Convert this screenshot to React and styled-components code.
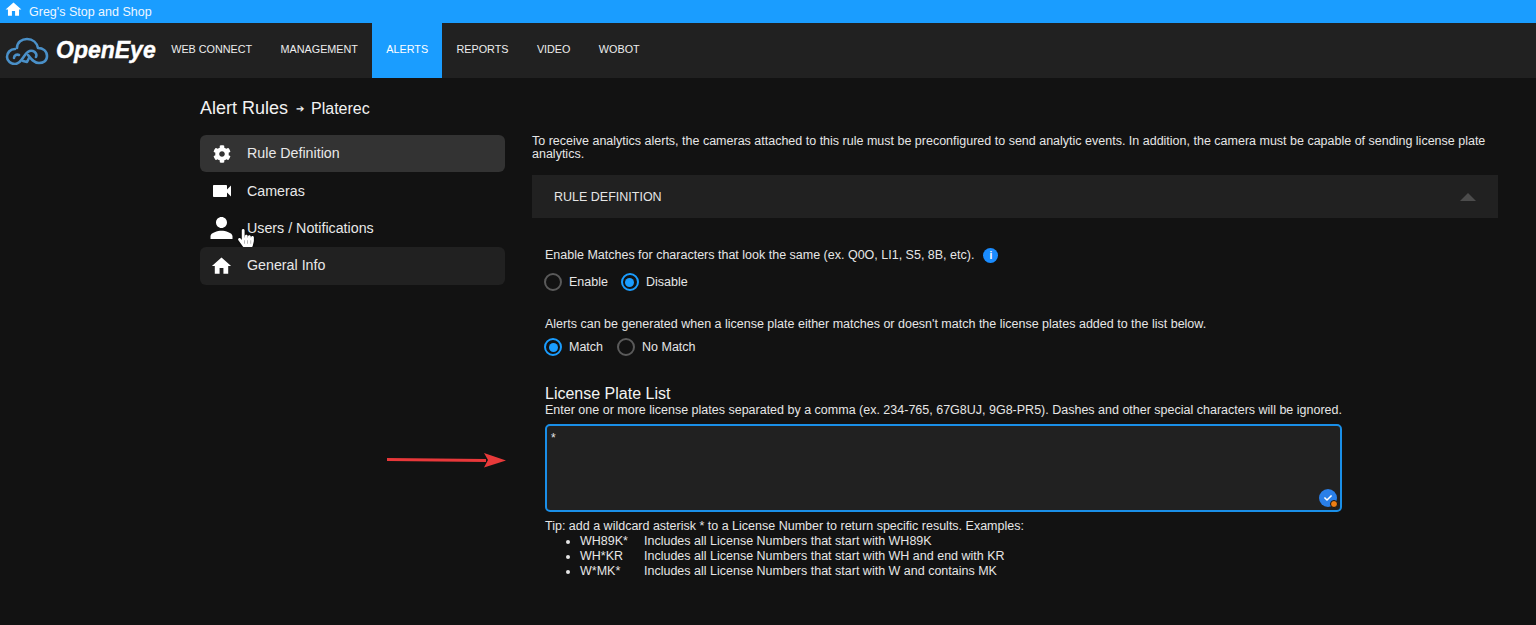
import React from "react";
import styled, { createGlobalStyle } from "styled-components";
import { FaCog, FaHandPointer, FaCheck } from "react-icons/fa";
import { MdHome, MdPerson, MdVideocam } from "react-icons/md";

const GlobalStyle = createGlobalStyle`
  html, body {
    margin: 0;
    padding: 0;
    background: #121212;
    height: 100%;
    overflow: hidden;
  }
  body {
    font-family: "Liberation Sans", Arial, sans-serif;
    color: #fff;
  }
`;

const TopBar = styled.div`
  height: 23px;
  background: #1a9dff;
  display: flex;
  align-items: center;
  gap: 6px;
  padding-left: 4px;
  font-size: 12.5px;
  color: #eef7ff;
  svg {
    font-size: 19px;
    color: #fff;
    margin-top: -4px;
  }
`;

const NavBar = styled.nav`
  height: 55px;
  background: #212121;
  display: flex;
  align-items: stretch;
`;

const Brand = styled.div`
  width: 157px;
  display: flex;
  align-items: center;
  gap: 7px;
  padding-left: 5px;
  box-sizing: border-box;
  flex-shrink: 0;
`;

const BrandName = styled.span`
  font-size: 23px;
  font-weight: 700;
  font-style: italic;
  color: #fff;
  -webkit-text-stroke: 0.4px #fff;
`;

const NavItem = styled.div`
  display: flex;
  align-items: center;
  padding: 0 14.2px 3px;
  font-size: 10.8px;
  color: ${(p) => (p.$active ? "#fff" : "#eee")};
  background: ${(p) => (p.$active ? "#1a9dff" : "transparent")};
`;

const Main = styled.div`
  display: flex;
  padding-left: 200px;
  align-items: flex-start;
`;

const Side = styled.aside`
  width: 305px;
  flex-shrink: 0;
  margin-right: 27px;
`;

const Crumbs = styled.div`
  height: 57px;
  box-sizing: border-box;
  padding-top: 4px;
  display: flex;
  align-items: center;
  font-size: 18px;
  color: #f2f2f2;
`;

const CrumbSep = styled.span`
  font-size: 10px;
  margin: 0 7.5px;
`;

const CrumbLeaf = styled.span`
  font-size: 16px;
`;

const SideItem = styled.div`
  position: relative;
  height: 37.4px;
  box-sizing: border-box;
  padding: 0 0 1px 47px;
  display: flex;
  align-items: center;
  border-radius: 6px;
  font-size: 14.25px;
  color: #e8e8e8;
  background: ${(p) => p.$bg || "transparent"};
`;

const SideIcon = styled.span`
  position: absolute;
  left: ${(p) => p.$left || 13}px;
  top: 50%;
  transform: translateY(-50%);
  display: flex;
  color: #fff;
  font-size: ${(p) => p.$size || 18}px;
`;

const Pointer = styled.span`
  position: absolute;
  left: 37px;
  top: 19px;
  display: flex;
  font-size: 18px;
  color: #fff;
  filter: drop-shadow(0 0 1px #000);
`;

const Content = styled.section`
  width: 966px;
  padding-top: 57px;
`;

const Intro = styled.p`
  margin: 0 0 14px;
  font-size: 12.5px;
  line-height: 13px;
  color: #e6e6e6;
`;

const PanelHead = styled.div`
  height: 43px;
  background: #212121;
  display: flex;
  align-items: center;
  justify-content: space-between;
  padding: 0 22px;
  font-size: 12.5px;
  color: #e6e6e6;
`;

const Caret = styled.span`
  width: 0;
  height: 0;
  border-left: 8px solid transparent;
  border-right: 8px solid transparent;
  border-bottom: 8px solid #4c4c4c;
`;

const PanelBody = styled.div`
  padding: 30px 0 0 13px;
`;

const Line = styled.div`
  display: flex;
  align-items: center;
  gap: 9px;
  font-size: 12.5px;
  line-height: 15px;
  color: #e6e6e6;
`;

const InfoDot = styled.span`
  width: 15px;
  height: 15px;
  border-radius: 50%;
  background: #1a8cff;
  color: #fff;
  font-size: 10px;
  font-weight: 700;
  display: flex;
  align-items: center;
  justify-content: center;
`;

const RadioRow = styled.div`
  display: flex;
  gap: ${(p) => p.$gap || 13}px;
  margin: ${(p) => p.$top || 10}px 0 ${(p) => p.$after || 0}px -1px;
`;

const RadioLabel = styled.label`
  display: flex;
  align-items: center;
  gap: 7px;
  font-size: 12.5px;
  color: #e6e6e6;
`;

const RadioMark = styled.span`
  width: 18px;
  height: 18px;
  box-sizing: border-box;
  border-radius: 50%;
  border: 2px solid ${(p) => (p.$on ? "#1a9dff" : "#5a5a5a")};
  display: flex;
  align-items: center;
  justify-content: center;
  &::after {
    content: "";
    width: 9px;
    height: 9px;
    border-radius: 50%;
    background: ${(p) => (p.$on ? "#1a9dff" : "transparent")};
  }
`;

const ListTitle = styled.h3`
  margin: 0;
  font-size: 16px;
  font-weight: 400;
  line-height: 18px;
  color: #f2f2f2;
`;

const Hint = styled.div`
  font-size: 12.5px;
  line-height: 15px;
  color: #e6e6e6;
`;

const PlateBox = styled.div`
  position: relative;
  width: 797px;
  height: 88px;
  margin-top: 6px;
  box-sizing: border-box;
  border: 2px solid #1a8fe8;
  border-radius: 5px;
  background: #212121;
  padding: 5px 4px;
  font-size: 12px;
  color: #e6e6e6;
`;

const CheckBadge = styled.span`
  position: absolute;
  right: 3px;
  bottom: 3px;
  width: 18px;
  height: 18px;
  border-radius: 50%;
  background: #2a7fe8;
  color: #fff;
  display: flex;
  align-items: center;
  justify-content: center;
  font-size: 8px;
  &::after {
    content: "";
    position: absolute;
    right: -1px;
    bottom: -1px;
    width: 6px;
    height: 6px;
    border-radius: 50%;
    background: #f07f13;
    border: 1.5px solid #121212;
  }
`;

const Arrow = styled.svg`
  position: absolute;
  left: 386px;
  top: 452px;
`;

const Tip = styled.div`
  margin-top: 7px;
  font-size: 12.5px;
  line-height: 15px;
  color: #e6e6e6;
`;

const TipList = styled.ul`
  margin: 0;
  padding: 0 0 0 35px;
`;

const TipItem = styled.li`
  span {
    display: inline-block;
    width: 64px;
  }
`;

const CloudLogo = () => (
  <svg width="44" height="28" viewBox="0 0 44 28" fill="none" stroke="#4a90c8" strokeWidth="2.6" strokeLinecap="round" strokeLinejoin="round">
    <path d="M12 11 C12 5 17 2 22 2 C28 2 32 6 33 11 C38 11 42 14 42 19 C42 24 38 26 34 26 C29 26 26 22 23 18" />
    <path d="M10 12 C5 12 2 16 2 20 C2 24 6 27 10 27 C15 27 17 22 20 18 C22 15 25 13 28 14 C31 15 32 18 31 20" />
    <path d="M18 24 L22 25 L24 21" />
    <path d="M9 21 C9 18 12 17 14 18" />
  </svg>
);

const tips = [
  ["WH89K*", "Includes all License Numbers that start with WH89K"],
  ["WH*KR", "Includes all License Numbers that start with WH and end with KR"],
  ["W*MK*", "Includes all License Numbers that start with W and contains MK"],
];

export default function App() {
  return (
    <>
      <GlobalStyle />
      <TopBar>
        <MdHome />
        <span>Greg's Stop and Shop</span>
      </TopBar>
      <NavBar>
        <Brand>
          <CloudLogo />
          <BrandName>OpenEye</BrandName>
        </Brand>
        <NavItem>WEB CONNECT</NavItem>
        <NavItem>MANAGEMENT</NavItem>
        <NavItem $active>ALERTS</NavItem>
        <NavItem>REPORTS</NavItem>
        <NavItem>VIDEO</NavItem>
        <NavItem>WOBOT</NavItem>
      </NavBar>
      <Main>
        <Side>
          <Crumbs>
            Alert Rules
            <CrumbSep>➔</CrumbSep>
            <CrumbLeaf>Platerec</CrumbLeaf>
          </Crumbs>
          <SideItem $bg="#333333">
            <SideIcon><FaCog /></SideIcon>
            Rule Definition
          </SideItem>
          <SideItem>
            <SideIcon $left={10} $size={24}><MdVideocam /></SideIcon>
            Cameras
          </SideItem>
          <SideItem>
            <SideIcon $left={5} $size={33}><MdPerson /></SideIcon>
            Users / Notifications
            <Pointer><FaHandPointer /></Pointer>
          </SideItem>
          <SideItem $bg="#212121">
            <SideIcon $left={10} $size={23}><MdHome /></SideIcon>
            General Info
          </SideItem>
        </Side>
        <Content>
          <Intro>
            To receive analytics alerts, the cameras attached to this rule must be preconfigured to send analytic events. In addition, the camera must be capable of sending license plate analytics.
          </Intro>
          <PanelHead>
            RULE DEFINITION
            <Caret />
          </PanelHead>
          <PanelBody>
            <Line>
              Enable Matches for characters that look the same (ex. Q0O, LI1, S5, 8B, etc).
              <InfoDot>i</InfoDot>
            </Line>
            <RadioRow $after={26}>
              <RadioLabel><RadioMark />Enable</RadioLabel>
              <RadioLabel><RadioMark $on />Disable</RadioLabel>
            </RadioRow>
            <Line>Alerts can be generated when a license plate either matches or doesn't match the license plates added to the list below.</Line>
            <RadioRow $top={6} $gap={14} $after={29}>
              <RadioLabel><RadioMark $on />Match</RadioLabel>
              <RadioLabel><RadioMark />No Match</RadioLabel>
            </RadioRow>
            <ListTitle>License Plate List</ListTitle>
            <Hint>Enter one or more license plates separated by a comma (ex. 234-765, 67G8UJ, 9G8-PR5). Dashes and other special characters will be ignored.</Hint>
            <PlateBox>
              *
              <CheckBadge><FaCheck /></CheckBadge>
            </PlateBox>
            <Tip>
              Tip: add a wildcard asterisk * to a License Number to return specific results. Examples:
              <TipList>
                {tips.map(([code, text]) => (
                  <TipItem key={code}><span>{code}</span>{text}</TipItem>
                ))}
              </TipList>
            </Tip>
          </PanelBody>
        </Content>
      </Main>
      <Arrow width="122" height="18" viewBox="0 0 122 18">
        <path d="M1 7.5 L100 8.5" stroke="#e8383a" strokeWidth="3" />
        <path d="M98 1 L120 8.5 L98 15.5 L102 8 Z" fill="#e83a3a" />
      </Arrow>
    </>
  );
}
